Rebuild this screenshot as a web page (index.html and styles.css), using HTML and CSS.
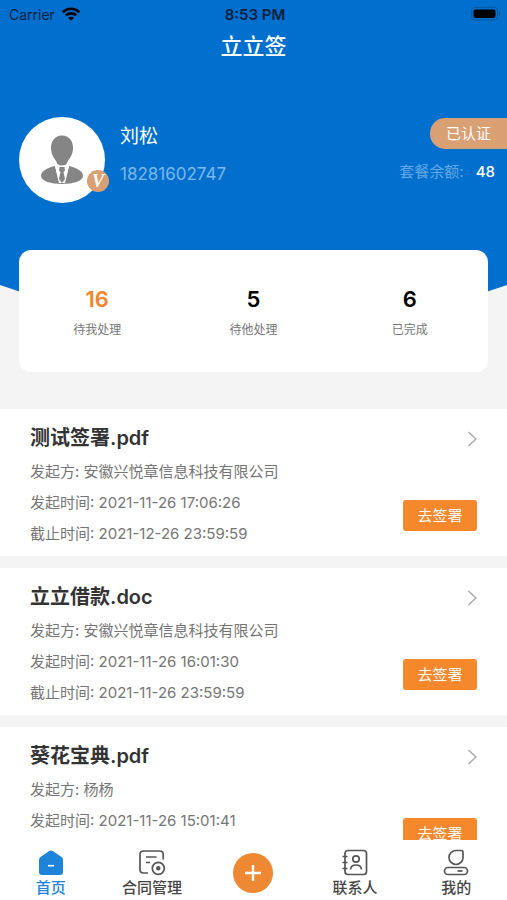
FILE: index.html
```html
<!DOCTYPE html>
<html lang="zh-CN">
<head>
<meta charset="utf-8">
<meta name="viewport" content="width=device-width, initial-scale=1">
<title>立立签</title>
<link rel="stylesheet" href="styles.css">
</head>
<body>
<main class="page">
  <header class="hero">
    <div class="status">
      <span class="carrier">Carrier
        <svg width="18" height="14" viewBox="0 0 18 14" aria-hidden="true"><g fill="none" stroke="#000" stroke-width="2.6"><path d="M.8 5.200C5.500 .6 12.500 .6 17.200 5.200"/><path d="M3.800 8.400C6.800 5.700 11.200 5.700 14.200 8.400"/></g><path d="M6 10.800C7.800 9.300 10.200 9.300 12 10.800L9 13.800z" fill="#000"/></svg>
      </span>
      <span class="clock">8:53 PM</span>
      <svg class="battery" width="30" height="14" viewBox="0 0 30 14" aria-hidden="true"><rect x=".5" y=".5" width="26" height="12.500" rx="3.500" fill="none" stroke="#05569f"/><rect x="2.500" y="2.500" width="22" height="8.500" rx="2" fill="#000"/><path d="M28 4.800C29.800 5.300 29.800 8.200 28 8.700z" fill="#05569f"/></svg>
    </div>
    <h1 class="title">立立签</h1>
    <section class="profile">
      <div class="avatar">
        <svg width="86" height="86" viewBox="0 0 86 86" role="img" aria-label="头像"><circle cx="43" cy="43" r="43" fill="#fff"/><g fill="#858585"><path d="M43 18.500C50 18.500 54.200 24 54 31.500C53.800 38 50.500 41.500 48.700 44.500C47.800 47.500 46 48.500 43 48.500S38.200 47.500 37.300 44.500C35.500 41.500 32.200 38 32 31.500C31.800 24 36 18.500 43 18.500z"/><path d="M36 49L40 66H46L50 49C58 51 64 54 64 59C64 64 54 67 43 67S22 64 22 59C22 54 28 51 36 49z"/></g><path d="M36 49L39.500 63L43 53.500L46.500 63L50 49L46 50.500H40z" fill="#fff"/><path d="M40.500 50H45.500L46 53.500L44.500 55L46 62L43 66L40 62L41.500 55L40 53.500z" fill="#858585"/></svg>
        <span class="verified">V</span>
      </div>
      <div class="person">
        <h2 class="name">刘松</h2>
        <p class="phone">18281602747</p>
      </div>
      <div class="account">
        <span class="cert">已认证</span>
        <p class="balance">套餐余额: <b>48</b></p>
      </div>
    </section>
  </header>

  <section class="stats">
    <a href="#mine" class="stat active"><strong>16</strong><span>待我处理</span></a>
    <a href="#others" class="stat"><strong>5</strong><span>待他处理</span></a>
    <a href="#done" class="stat"><strong>6</strong><span>已完成</span></a>
  </section>

  <section class="list">
    <article class="doc">
      <div class="info">
        <h3>测试签署.pdf</h3>
        <p>发起方: 安徽兴悦章信息科技有限公司</p>
        <p>发起时间: 2021-11-26 17:06:26</p>
        <p>截止时间: 2021-12-26 23:59:59</p>
      </div>
      <div class="side">
        <svg class="chevron" width="10" height="16" viewBox="0 0 10 16" aria-hidden="true"><path d="M1.500 1L9 8L1.500 15"/></svg>
        <button type="button" class="sign">去签署</button>
      </div>
    </article>
    <article class="doc">
      <div class="info">
        <h3>立立借款.doc</h3>
        <p>发起方: 安徽兴悦章信息科技有限公司</p>
        <p>发起时间: 2021-11-26 16:01:30</p>
        <p>截止时间: 2021-11-26 23:59:59</p>
      </div>
      <div class="side">
        <svg class="chevron" width="10" height="16" viewBox="0 0 10 16" aria-hidden="true"><path d="M1.500 1L9 8L1.500 15"/></svg>
        <button type="button" class="sign">去签署</button>
      </div>
    </article>
    <article class="doc">
      <div class="info">
        <h3>葵花宝典.pdf</h3>
        <p>发起方: 杨杨</p>
        <p>发起时间: 2021-11-26 15:01:41</p>
      </div>
      <div class="side">
        <svg class="chevron" width="10" height="16" viewBox="0 0 10 16" aria-hidden="true"><path d="M1.500 1L9 8L1.500 15"/></svg>
        <button type="button" class="sign">去签署</button>
      </div>
    </article>
  </section>
</main>

<nav class="tabs">
  <a href="#home" class="tab current">
    <svg width="28" height="28" viewBox="0 0 28 28" aria-hidden="true"><path d="M12.200 3Q14 1.800 15.800 3L24.500 9Q26 10.100 26 12V24Q26 27 23 27H5Q2 27 2 24V12Q2 10.100 3.500 9z" fill="#1d84da"/><path d="M11 17.700H17" stroke="#fff" stroke-width="1.600"/></svg>
    <span>首页</span>
  </a>
  <a href="#contracts" class="tab">
    <svg class="line" width="28" height="28" viewBox="0 0 28 28" aria-hidden="true"><path d="M25.200 11.500V6.500Q25.200 3 21.700 3H5.500Q2 3 2 6.500V21.500Q2 25 5.500 25H10M8 9H18.500M8 14.500H12"/><circle cx="20.300" cy="20.300" r="6"/><circle cx="20.300" cy="20.300" r="1.400" fill="#555"/></svg>
    <span>合同管理</span>
  </a>
  <button type="button" class="add" aria-label="新建"><svg width="18" height="18" viewBox="0 0 18 18" aria-hidden="true"><path d="M9 1V17M1 9H17" stroke="#fff" stroke-width="2.400"/></svg></button>
  <a href="#contacts" class="tab">
    <svg class="line" width="28" height="28" viewBox="0 0 28 28" aria-hidden="true"><rect x="4" y="2.500" width="21.500" height="24" rx="3"/><path d="M1.500 8.500H6.500M1.500 14.500H6.500M1.500 20.500H6.500"/><circle cx="15" cy="11" r="3.200"/><path d="M9.500 21.500C10 15.500 20 15.500 20.500 21.500"/></svg>
    <span>联系人</span>
  </a>
  <a href="#me" class="tab">
    <svg class="line" width="28" height="28" viewBox="0 0 28 28" aria-hidden="true"><path d="M14 2.500H19.500Q21 2.500 21 4V9.500A7 7 0 1 1 14 2.500z"/><rect x="2.500" y="19.500" width="23" height="7" rx="3.500"/><path d="M15.500 23H20.500"/></svg>
    <span>我的</span>
  </a>
</nav>
</body>
</html>
```
FILE: styles.css
```css
* {
  box-sizing: border-box;
}

body {
  display: flex;
  flex-direction: column;
  height: 100vh;
  margin: 0;
  background: #f4f4f4;
  color: #757575;
  font-family: Inter, "Noto Sans CJK SC", sans-serif;
  font-size: 15px;
}

h1, h2, h3, p {
  margin: 0;
}

a {
  color: inherit;
  text-decoration: none;
}

button {
  padding: 0;
  border: 0;
  font: inherit;
}

.page {
  flex: 1;
  min-height: 0;
  overflow-y: auto;
  scrollbar-width: none;
}

.hero {
  height: 302px;
  background: #006fce;
  clip-path: polygon(0 0, 100% 0, 100% 285px, 90% 100%, 10% 100%, 0 285px);
  color: #fff;
}

.status {
  display: grid;
  grid-template-columns: 1fr auto 1fr;
  align-items: center;
  height: 28px;
  padding: 0 6px 0 9px;
  color: #06213d;
  font-size: 14px;
}

.carrier {
  display: flex;
  align-items: center;
  gap: 7px;
}

.clock {
  font-size: 15px;
  font-weight: 600;
}

.battery {
  justify-self: end;
}

.title {
  font-size: 22px;
  font-weight: 500;
  line-height: 36px;
  text-align: center;
}

.profile {
  display: flex;
  gap: 15px;
  padding: 53px 0 0 19px;
}

.avatar {
  position: relative;
  height: 86px;
}

.verified {
  position: absolute;
  right: -4px;
  bottom: 11px;
  width: 22px;
  height: 22px;
  border-radius: 50%;
  background: #d9a074;
  font-family: "Liberation Serif", serif;
  font-size: 18px;
  font-style: italic;
  font-weight: 700;
  line-height: 22px;
  text-align: center;
}

.person {
  flex: 1;
}

.name {
  font-size: 19px;
  font-weight: 400;
  line-height: 40px;
}

.phone {
  color: #7eb8ea;
  font-size: 17px;
  line-height: 34px;
}

.account {
  display: flex;
  flex-direction: column;
  align-items: flex-end;
  gap: 10px;
}

.cert {
  margin-top: 1px;
  padding: 0 16px;
  border-radius: 15px 0 0 15px;
  background: #d9a074;
  line-height: 31px;
}

.balance {
  padding-right: 12px;
  color: #64a7e4;
  line-height: 26px;
}

.balance b {
  margin-left: 8px;
  color: #fff;
  font-weight: 500;
}

.stats {
  position: relative;
  display: grid;
  grid-template-columns: repeat(3, 1fr);
  margin: -52px 19px 37px;
  padding: 34px 0 26px;
  border-radius: 12px;
  background: #fff;
}

.stat {
  display: flex;
  flex-direction: column;
  align-items: center;
  font-size: 12px;
  line-height: 32px;
}

.stat strong {
  color: #000;
  font-size: 22px;
  font-weight: 600;
  line-height: 30px;
}

.stat.active strong {
  color: #f3852d;
}

.list {
  display: grid;
  gap: 12px;
}

.doc {
  display: flex;
  justify-content: space-between;
  min-height: 147px;
  padding: 11px 30px 7px;
  background: #fff;
  line-height: 31px;
}

.doc h3 {
  color: #333;
  font-size: 20px;
  font-weight: 600;
  line-height: 36px;
}

.side {
  display: flex;
  flex-direction: column;
  align-items: flex-end;
  justify-content: space-between;
  padding: 11px 0 18px;
}

.chevron {
  fill: none;
  stroke: #aaa;
  stroke-width: 1.5;
}

.sign {
  width: 74px;
  border-radius: 3px;
  background: #f5872c;
  color: #fff;
  line-height: 31px;
}

.tabs {
  display: grid;
  grid-template-columns: repeat(5, 1fr);
  justify-items: center;
  height: 60px;
  padding-top: 8px;
  background: #fff;
}

.tab {
  display: flex;
  flex-direction: column;
  align-items: center;
  color: #444;
  font-weight: 500;
  line-height: 24px;
}

.tab.current {
  color: #1d84da;
}

.line {
  fill: none;
  stroke: #555;
  stroke-width: 1.7;
}

.add {
  display: grid;
  place-items: center;
  width: 40px;
  height: 40px;
  margin-top: 5px;
  border-radius: 50%;
  background: #ee8833;
}
```
